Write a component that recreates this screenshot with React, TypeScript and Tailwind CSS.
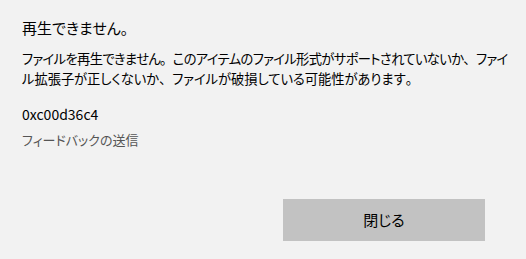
import React from "react";

function P({ c }: { c: string }) {
  return <span className="[font-feature-settings:normal]">{c}</span>;
}

export default function App() {
  const font = {
    fontFamily: '"Noto Sans CJK JP", "Noto Sans", sans-serif',
  };
  return (
    <div
      className="w-[526px] h-[259px] bg-[#f2f2f2] text-black flex flex-col pl-[22px] pr-[10px] [font-feature-settings:'palt']"
      style={font}
    >
      <div className="pt-[18px] text-[15px] leading-[20px]">
        再生できません<P c="。" />
      </div>
      <div className="mt-[11px] text-[13.3px] leading-[20px] whitespace-nowrap">
        <div className="tracking-[-0.65px]">
          ファイルを再生できません<P c="。" />このアイテムのファイル形式がサポートされていないか<P c="、" />ファイ
        </div>
        <div className="tracking-[-0.05px]">
          ル拡張子が正しくないか<P c="、" />ファイルが破損している可能性があります<P c="。" />
        </div>
      </div>
      <div className="mt-[15px] text-[14px] leading-[20px]">0xc00d36c4</div>
      <div className="mt-[6px] text-[13px] leading-[20px] text-[#555555]">フィードバックの送信</div>
      <div className="flex justify-end mt-auto mb-[18px] pr-[31px]">
        <button className="w-[202px] h-[42px] bg-[#c2c2c2] text-[15px] text-black">
          閉じる
        </button>
      </div>
    </div>
  );
}
